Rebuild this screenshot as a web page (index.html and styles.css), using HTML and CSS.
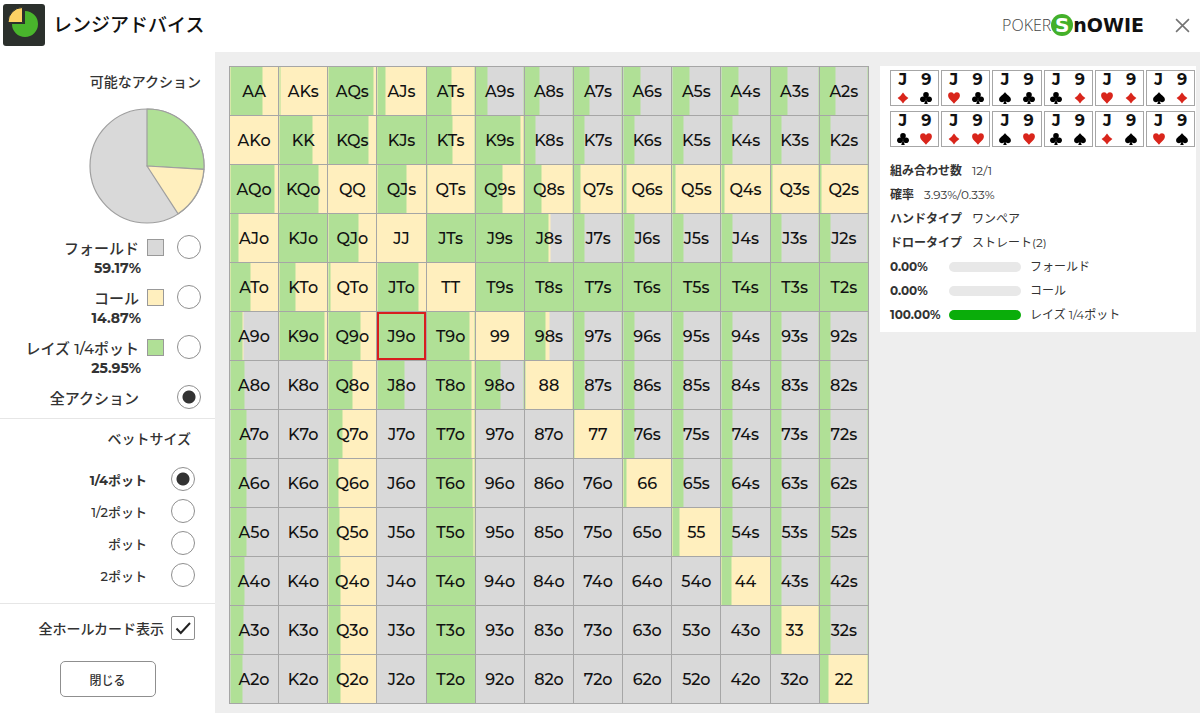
FILE: index.html
```html
<!DOCTYPE html>
<html lang="ja">
<head>
<meta charset="utf-8">
<meta name="viewport" content="width=device-width, initial-scale=1">
<title>レンジアドバイス</title>
<link rel="stylesheet" href="styles.css">
</head>
<body>
<svg class="symbols" aria-hidden="true">
  <symbol id="diamond" viewBox="0 0 12 12"><path fill="#d9251b" d="M6 .4Q8 3.6 11.4 6Q8 8.4 6 11.6Q4 8.4 .6 6Q4 3.6 6 .4Z"/></symbol>
  <symbol id="heart" viewBox="0 0 12 12"><path fill="#d9251b" d="M6 11.8C4.600 9.200 .1 6.800 .1 3.400C.1 1.400 1.500.2 3.100.2C4.500.2 5.500 1 6 2.200C6.500 1 7.500.2 8.900.2C10.500.2 11.900 1.400 11.900 3.400C11.900 6.800 7.400 9.200 6 11.800Z"/></symbol>
  <symbol id="spade" viewBox="0 0 12 12"><path d="M6 0C7.200 2.600 11.900 4.400 11.900 7.400C11.900 9.200 10.500 10.200 9 10.200C7.900 10.200 7.100 9.700 6.600 9L7.800 12H4.200L5.400 9C4.900 9.700 4.100 10.200 3 10.200C1.500 10.200.1 9.200.1 7.400C.1 4.400 4.800 2.600 6 0Z"/></symbol>
  <symbol id="club" viewBox="0 0 12 12"><circle cx="6" cy="2.900" r="2.800"/><circle cx="2.900" cy="7.300" r="2.800"/><circle cx="9.100" cy="7.300" r="2.800"/><path d="M5 5H7L6.600 8.500L7.800 12H4.200L5.400 8.500Z"/></symbol>
</svg>

<header class="topbar">
  <svg class="app-icon" viewBox="0 0 42 42" aria-hidden="true">
    <rect width="42" height="42" rx="3" fill="#2b302c"/>
    <path d="M22 20V7A13 13 0 1 1 9 20Z" fill="#49b52c"/>
    <path d="M19.500 3.500V18.500H5A14.500 15 0 0 1 19.500 3.500Z" fill="#fdd264" stroke="#2b302c" stroke-width="1"/>
  </svg>
  <h1 class="title">レンジアドバイス</h1>
  <div class="brand"><span class="brand-poker">POKER</span><span class="brand-s">S</span><span class="brand-nowie">nOWIE</span></div>
  <button class="close" type="button" aria-label="閉じる">
    <svg viewBox="0 0 14 14"><path d="M1 1L13 13M13 1L1 13" stroke="#747474" stroke-width="1.500" fill="none"/></svg>
  </button>
</header>

<div class="layout">
  <aside class="sidebar">
    <section class="group actions">
      <h2 class="heading">可能なアクション</h2>
      <svg class="pie" viewBox="0 0 116 116" role="img" aria-label="アクションの割合">
        <g stroke="#9f9f9f" stroke-width="1.200" stroke-linejoin="round">
          <circle cx="58" cy="58" r="57" fill="#d9d9d9"/>
          <path d="M58 58V1A57 57 0 0 1 114.900 61.400Z" fill="#b0e096"/>
          <path d="M58 58L114.900 61.400A57 57 0 0 1 89.100 105.800Z" fill="#ffefbe"/>
        </g>
      </svg>
      <label class="option"><span>フォールド</span><i class="swatch fold"></i><input class="radio" type="radio" name="action"></label>
      <p class="share">59.17%</p>
      <label class="option"><span>コール</span><i class="swatch call"></i><input class="radio" type="radio" name="action"></label>
      <p class="share">14.87%</p>
      <label class="option"><span>レイズ 1/4ポット</span><i class="swatch raise"></i><input class="radio" type="radio" name="action"></label>
      <p class="share">25.95%</p>
      <label class="option"><span>全アクション</span><i class="swatch none"></i><input class="radio" type="radio" name="action" checked></label>
    </section>
    <section class="group bets">
      <h2 class="heading">ベットサイズ</h2>
      <label class="bet"><span>1/4ポット</span><input class="radio" type="radio" name="bet" checked></label>
      <label class="bet"><span>1/2ポット</span><input class="radio" type="radio" name="bet"></label>
      <label class="bet"><span>ポット</span><input class="radio" type="radio" name="bet"></label>
      <label class="bet"><span>2ポット</span><input class="radio" type="radio" name="bet"></label>
    </section>
    <section class="footer">
      <label class="show-all"><span>全ホールカード表示</span>
        <span class="tick"><input type="checkbox" checked><svg viewBox="0 0 24 24" aria-hidden="true"><path d="M5.500 12.500L9.800 17L19 7" fill="none" stroke="#222" stroke-width="2"/></svg></span>
      </label>
      <button class="done" type="button">閉じる</button>
    </section>
  </aside>

  <main class="content">
    <table class="matrix" aria-label="ハンドレンジ"><tbody id="matrix"></tbody></table>
    <section class="details">
      <div class="combos" id="combos"></div>
      <dl class="facts">
        <div><dt>組み合わせ数</dt><dd>12/1</dd></div>
        <div><dt>確率</dt><dd>3.93%/0.33%</dd></div>
        <div><dt>ハンドタイプ</dt><dd>ワンペア</dd></div>
        <div><dt>ドロータイプ</dt><dd>ストレート(2)</dd></div>
      </dl>
      <div class="bars">
        <div class="bar-row"><b>0.00%</b><span class="bar"></span><span>フォールド</span></div>
        <div class="bar-row"><b>0.00%</b><span class="bar"></span><span>コール</span></div>
        <div class="bar-row"><b>100.00%</b><span class="bar full"></span><span>レイズ 1/4ポット</span></div>
      </div>
    </section>
  </main>
</div>
<script src="app.js"></script>
</body>
</html>
```
FILE: styles.css
```css
* { box-sizing: border-box; }

body {
  margin: 0;
  min-height: 100vh;
  display: flex;
  flex-direction: column;
  background: #fff;
  color: #333;
  font-family: Montserrat, Inter, "Noto Sans CJK JP", sans-serif;
  font-size: 14px;
}

h1, h2, p, dl, dd { margin: 0; }
button { font: inherit; color: inherit; background: none; cursor: pointer; }
.symbols { display: none; }

.topbar {
  display: flex;
  align-items: center;
  height: 52px;
  padding: 0 7px 2px 3px;
}
.app-icon { width: 42px; height: 42px; }
.title {
  margin-left: 8px;
  padding-top: 2px;
  font-size: 19px;
  font-weight: 500;
  line-height: 28px;
  color: #111;
}
.brand {
  display: flex;
  align-items: center;
  margin-left: auto;
  line-height: 22px;
}
.brand-poker { font-family: "Open Sans", sans-serif; font-size: 16px; font-weight: 300; color: #444; }
.brand-s {
  width: 22px;
  height: 22px;
  border-radius: 50%;
  background: #43b02a;
  color: #fff;
  font-family: "DejaVu Sans", sans-serif;
  font-size: 20px;
  font-weight: 700;
  text-align: center;
}
.brand-nowie { font-family: "DejaVu Sans", sans-serif; font-size: 19px; font-weight: 700; color: #111; }
.close { margin-left: 28px; padding: 3px; border: 0; }
.close svg { display: block; width: 15px; height: 15px; }

.layout { flex: 1; display: flex; }

.sidebar { flex: none; width: 215px; font-weight: 500; }
.group { display: flex; flex-direction: column; border-bottom: 1px solid #e6e6e6; }
.heading { font-size: 14px; font-weight: 500; line-height: 20px; text-align: right; }
.actions { padding: 20px 14px 8px 0; }
.pie { width: 116px; height: 116px; margin: 16px -4px 10px 0; align-self: flex-end; }

.option, .bet, .show-all { display: flex; align-items: center; justify-content: flex-end; }
.option { height: 26px; font-size: 15px; }
.swatch { width: 17px; height: 17px; margin: 0 13px 0 8px; border: 1px solid #999; }
.fold { background: #d9d9d9; }
.call { background: #ffefbe; }
.raise { background: #b0e096; }
.none { border-color: transparent; }
.share {
  margin-bottom: 8px;
  padding-right: 60px;
  font-weight: 700;
  line-height: 16px;
  text-align: right;
}
.radio {
  appearance: none;
  flex: none;
  width: 24px;
  height: 24px;
  margin: 0;
  border: 1px solid #8f8f8f;
  border-radius: 50%;
  background: #fff;
}
.radio:checked { background: radial-gradient(circle, #333 6px, #fff 7px); }

.bets { padding: 10px 20px 12px 0; }
.bets .heading { margin-bottom: 14px; padding-right: 4px; }
.bet { height: 32px; gap: 24px; font-size: 13px; }
.bet:has(:checked) { font-weight: 700; }

.footer { padding: 12px 0; }
.show-all { gap: 7px; padding-right: 20px; }
.tick { display: grid; width: 24px; height: 24px; }
.tick > * { grid-area: 1 / 1; }
.tick input {
  appearance: none;
  width: 24px;
  height: 24px;
  margin: 0;
  border: 1px solid #8f8f8f;
  border-radius: 2px;
}
.tick svg { visibility: hidden; pointer-events: none; }
.tick input:checked + svg { visibility: visible; }
.done {
  display: block;
  width: 96px;
  height: 36px;
  margin: 21px auto 0;
  border: 1px solid #8f8f8f;
  border-radius: 5px;
  font-size: 12px;
}

.content {
  flex: 1;
  display: grid;
  grid-template-columns: minmax(0, 640fr) minmax(0, 316fr);
  align-items: start;
  gap: 11px;
  padding: 14px 4px 8px 14px;
  background: #eee;
}

.matrix {
  width: 100%;
  table-layout: fixed;
  border-collapse: collapse;
  color: #111;
  font-size: 16px;
  font-weight: 500;
}
.matrix td {
  height: 49px;
  padding: 0;
  border: 1px solid #a6a6a6;
  text-align: center;
  background: linear-gradient(to right, #b0e096 var(--raise), #ffefbe var(--raise) var(--call), #d9d9d9 var(--call));
}
.matrix .selected { box-shadow: inset 0 0 0 2px #d81e1e; }

.details { padding: 4px 1px 5px 10px; background: #fff; font-size: 12px; }
.combos { display: grid; grid-template-columns: repeat(6, minmax(0, 1fr)); gap: 5px 2px; }
.combo {
  display: grid;
  grid-template-columns: 1fr 1fr;
  justify-items: center;
  align-content: start;
  height: 36px;
  border: 1px solid #a6a6a6;
  color: #111;
  font-size: 16px;
  font-weight: 700;
  line-height: 17px;
}
.combo svg { width: 12px; height: 12px; margin-top: 4px; }
.facts { margin-top: 12px; }
.facts div { display: flex; gap: 10px; line-height: 24px; }
.facts dt { font-weight: 700; }
.bar-row { display: grid; grid-template-columns: 50px 72px 1fr; gap: 9px; align-items: center; line-height: 24px; }
.bar { height: 10px; border-radius: 5px; background: #e8e8e8; }
.full { background: #0aad0a; }
```
FILE: app.js
```js
const RANKS = 'AKQJT98765432';

// One row per rank. Each entry is the raise share, optionally "/" and the end of the call share.
const MIX = [
  '67/100 2/100 93/100 16/100 52/100 26 31 33 35 35 35 35 33',
  '0/100 69/100 84/100 100 55/100 94/100 23 23 23 23 23 23 23',
  '92/100 81/100 0/100 59/100 3/100 57/100 35/100 14/100 6/100 6/100 6/100 5/100 5/100',
  '16/100 100 62/100 0/100 100 100 50/54 23 23 23 23 23 23',
  '42/100 34/100 5/100 84/100 0/100 100 100 100 100 100 100 100 100',
  '26/28 94/100 66/100 100 89/100 1/100 44/52 23 23 23 23 23 23',
  '30 1 49/100 55 94/100 52 3/100 23 23 23 23 23 23',
  '33 1 30/100 0 94/100 0 0 3/100 23 23 23 23 23',
  '33 1 21/100 0 96/100 0 0 0 6/100 23 23 23 23',
  '33 1 23/100 0 97/100 0 0 0 0 14/100 23 23 23',
  '30 1 26/100 0 100 0 0 0 0 0 21/100 23 23',
  '28 1 26/100 0 100 0 0 0 0 0 0 23/100 23',
  '26 1 26/100 0 100 0 0 0 0 0 0 0 18/100'
];

function handName(row, col) {
  if (row === col) return RANKS[row] + RANKS[row];
  return row < col ? RANKS[row] + RANKS[col] + 's' : RANKS[col] + RANKS[row] + 'o';
}

const body = document.getElementById('matrix');
MIX.forEach((line, row) => {
  const tr = body.insertRow();
  line.split(' ').forEach((entry, col) => {
    const [raise, call = raise] = entry.split('/');
    const td = tr.insertCell();
    td.textContent = handName(row, col);
    td.style.setProperty('--raise', raise + '%');
    td.style.setProperty('--call', call + '%');
    if (td.textContent === 'J9o') td.className = 'selected';
  });
});

const COMBOS = [
  ['diamond', 'club'], ['heart', 'club'], ['spade', 'club'], ['club', 'diamond'], ['heart', 'diamond'], ['spade', 'diamond'],
  ['club', 'heart'], ['diamond', 'heart'], ['spade', 'heart'], ['club', 'spade'], ['diamond', 'spade'], ['heart', 'spade']
];
document.getElementById('combos').innerHTML = COMBOS.map(([a, b]) =>
  `<div class="combo"><span>J</span><span>9</span><svg><use href="#${a}"/></svg><svg><use href="#${b}"/></svg></div>`
).join('');
```
